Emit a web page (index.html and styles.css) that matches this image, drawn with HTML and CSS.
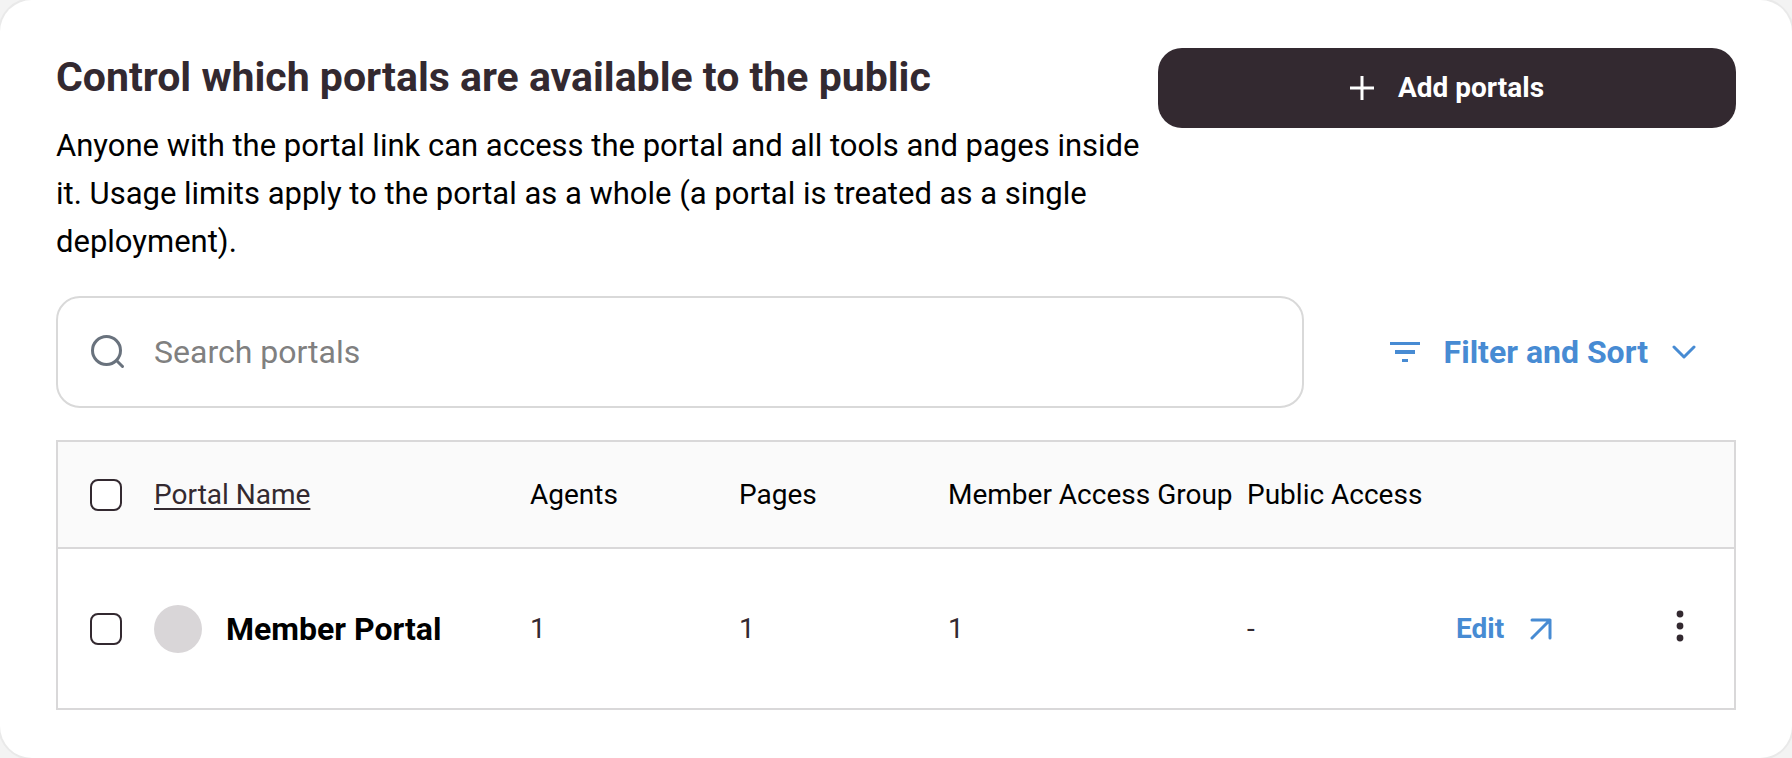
FILE: index.html
```
<!DOCTYPE html>
<html lang="en">
<head>
    <meta charset="UTF-8">
    <meta name="viewport" content="width=device-width, initial-scale=1.0">
    <title>Portals</title>
    <link rel="stylesheet" href="styles.css">
</head>
<body>
    <main class="card">
        <header class="card-header">
            <div class="card-intro">
                <h1>Control which portals are available to the public</h1>
                <p>Anyone with the portal link can access the portal and all tools and pages inside it. Usage limits apply to the portal as a whole (a portal is treated as a single deployment).</p>
            </div>
            <button type="button" class="add-button">
                <svg width="24" height="24" viewBox="0 0 24 24" fill="none" stroke="currentColor" stroke-width="3" aria-hidden="true">
                    <path d="M12 0v24M0 12h24"/>
                </svg>
                Add portals
            </button>
        </header>

        <div class="toolbar">
            <label class="search-box">
                <svg width="36" height="36" viewBox="0 0 36 36" fill="none" stroke="currentColor" stroke-width="3" stroke-linecap="round" aria-hidden="true">
                    <circle cx="16.5" cy="16.5" r="14"/>
                    <path d="M26.5 26.5l6 6"/>
                </svg>
                <input type="search" placeholder="Search portals" aria-label="Search portals">
            </label>
            <button type="button" class="filter-button">
                <svg width="30" height="20" viewBox="0 0 30 20" fill="currentColor" aria-hidden="true">
                    <path d="M0 0h30v3H0zM5 8h20v4H5zM12 17h6v3h-6z"/>
                </svg>
                Filter and Sort
                <svg width="24" height="14" viewBox="0 0 24 14" fill="none" stroke="currentColor" stroke-width="3" stroke-linecap="round" stroke-linejoin="round" aria-hidden="true">
                    <path d="M2 2l10 10L22 2"/>
                </svg>
            </button>
        </div>

        <table class="portal-table">
            <colgroup>
                <col class="col-check">
                <col class="col-name">
                <col class="col-small">
                <col class="col-small">
                <col class="col-group">
                <col class="col-small">
                <col class="col-small">
                <col>
            </colgroup>
            <thead>
                <tr>
                    <th class="check"><input type="checkbox" aria-label="Select all portals"></th>
                    <th><a href="#" class="sort-link">Portal Name</a></th>
                    <th>Agents</th>
                    <th>Pages</th>
                    <th>Member Access Group</th>
                    <th>Public Access</th>
                    <th></th>
                    <th></th>
                </tr>
            </thead>
            <tbody>
                <tr>
                    <td class="check"><input type="checkbox" aria-label="Select Member Portal"></td>
                    <td>
                        <div class="portal-name">
                            <span class="avatar"></span>
                            Member Portal
                        </div>
                    </td>
                    <td>1</td>
                    <td>1</td>
                    <td>1</td>
                    <td>-</td>
                    <td>
                        <a href="#" class="edit-link">
                            Edit
                            <svg width="22" height="22" viewBox="0 0 22 22" fill="none" stroke="currentColor" stroke-width="3" stroke-linecap="round" stroke-linejoin="round" aria-hidden="true">
                                <path d="M2 2h18v18M20 2L2 20"/>
                            </svg>
                        </a>
                    </td>
                    <td class="actions">
                        <button type="button" class="menu-button" aria-label="More actions">
                            <svg width="8" height="32" viewBox="0 0 8 32" fill="currentColor" aria-hidden="true">
                                <circle cx="4" cy="4" r="3.4"/>
                                <circle cx="4" cy="16" r="3.4"/>
                                <circle cx="4" cy="28" r="3.4"/>
                            </svg>
                        </button>
                    </td>
                </tr>
            </tbody>
        </table>
    </main>
</body>
</html>
```
FILE: styles.css
```
* {
    box-sizing: border-box;
}

body {
    margin: 0;
    background-color: #f3f3f3;
    color: #000;
    font-family: Roboto, "Liberation Sans", sans-serif;
    font-size: 28px;
    line-height: 40px;
}

button,
input {
    font: inherit;
}

button {
    border: none;
    cursor: pointer;
}

.card {
    min-height: 100vh;
    padding: 48px 56px;
    background-color: #fff;
    border-radius: 32px;
    box-shadow: 0 0 0 2px #e9e9e9;
}

.card-header {
    display: flex;
    align-items: flex-start;
    margin-bottom: 30px;
}

.card-intro {
    flex: 0 0 1102px;
}

.card-intro h1 {
    margin: 0 0 16px;
    font-size: 41px;
    line-height: 58px;
    color: #332930;
}

.card-intro p {
    margin: 0;
    font-size: 31px;
    line-height: 48px;
}

.add-button {
    flex: 1;
    display: flex;
    align-items: center;
    justify-content: center;
    gap: 24px;
    height: 80px;
    background-color: #332930;
    border-radius: 24px;
    color: #fff;
    font-weight: bold;
}

.toolbar {
    display: flex;
    align-items: center;
    justify-content: space-between;
    gap: 86px;
    margin-bottom: 32px;
    font-size: 32px;
}

.search-box {
    flex: 1;
    display: flex;
    align-items: center;
    gap: 28px;
    height: 112px;
    padding: 0 32px;
    border: 2px solid #d9d9d9;
    border-radius: 24px;
    color: #69727d;
}

.search-box input {
    flex: 1;
    padding: 0;
    border: none;
    outline: none;
    background: none;
}

.search-box input::placeholder {
    color: #808080;
}

.filter-button {
    display: flex;
    align-items: center;
    gap: 24px;
    padding: 0 40px 0 0;
    background: none;
    color: #478bd3;
    font-weight: bold;
}

.portal-table {
    width: 100%;
    table-layout: fixed;
    border-collapse: collapse;
    border: 2px solid #d9d8d9;
}

.col-check {
    width: 97px;
}

.col-name {
    width: 376px;
}

.col-small {
    width: 209px;
}

.col-group {
    width: 299px;
}

.portal-table th,
.portal-table td {
    padding: 0;
    text-align: left;
    white-space: nowrap;
}

.portal-table th {
    height: 107px;
    background-color: #fafafa;
    border-bottom: 2px solid #d9d8d9;
    font-weight: normal;
}

.portal-table td {
    height: 161px;
    color: #332930;
}

.portal-table .check {
    padding-left: 32px;
}

.check input {
    display: block;
    appearance: none;
    width: 32px;
    height: 32px;
    margin: 0;
    background-color: #fff;
    border: 2px solid #332930;
    border-radius: 8px;
}

.sort-link {
    color: #332930;
    text-decoration-thickness: 2px;
    text-underline-offset: 4px;
}

.portal-name {
    display: flex;
    align-items: center;
    gap: 24px;
    color: #000;
    font-size: 32px;
    font-weight: bold;
}

.avatar {
    width: 48px;
    height: 48px;
    border-radius: 50%;
    background-color: #d9d6d8;
}

.edit-link {
    display: flex;
    align-items: center;
    gap: 26px;
    color: #478bd3;
    font-weight: bold;
    text-decoration: none;
}

.portal-table .actions {
    padding-right: 50px;
}

.menu-button {
    display: block;
    margin-left: auto;
    padding: 0 0 6px;
    background: none;
    color: #332930;
}

.menu-button svg {
    display: block;
}
```
